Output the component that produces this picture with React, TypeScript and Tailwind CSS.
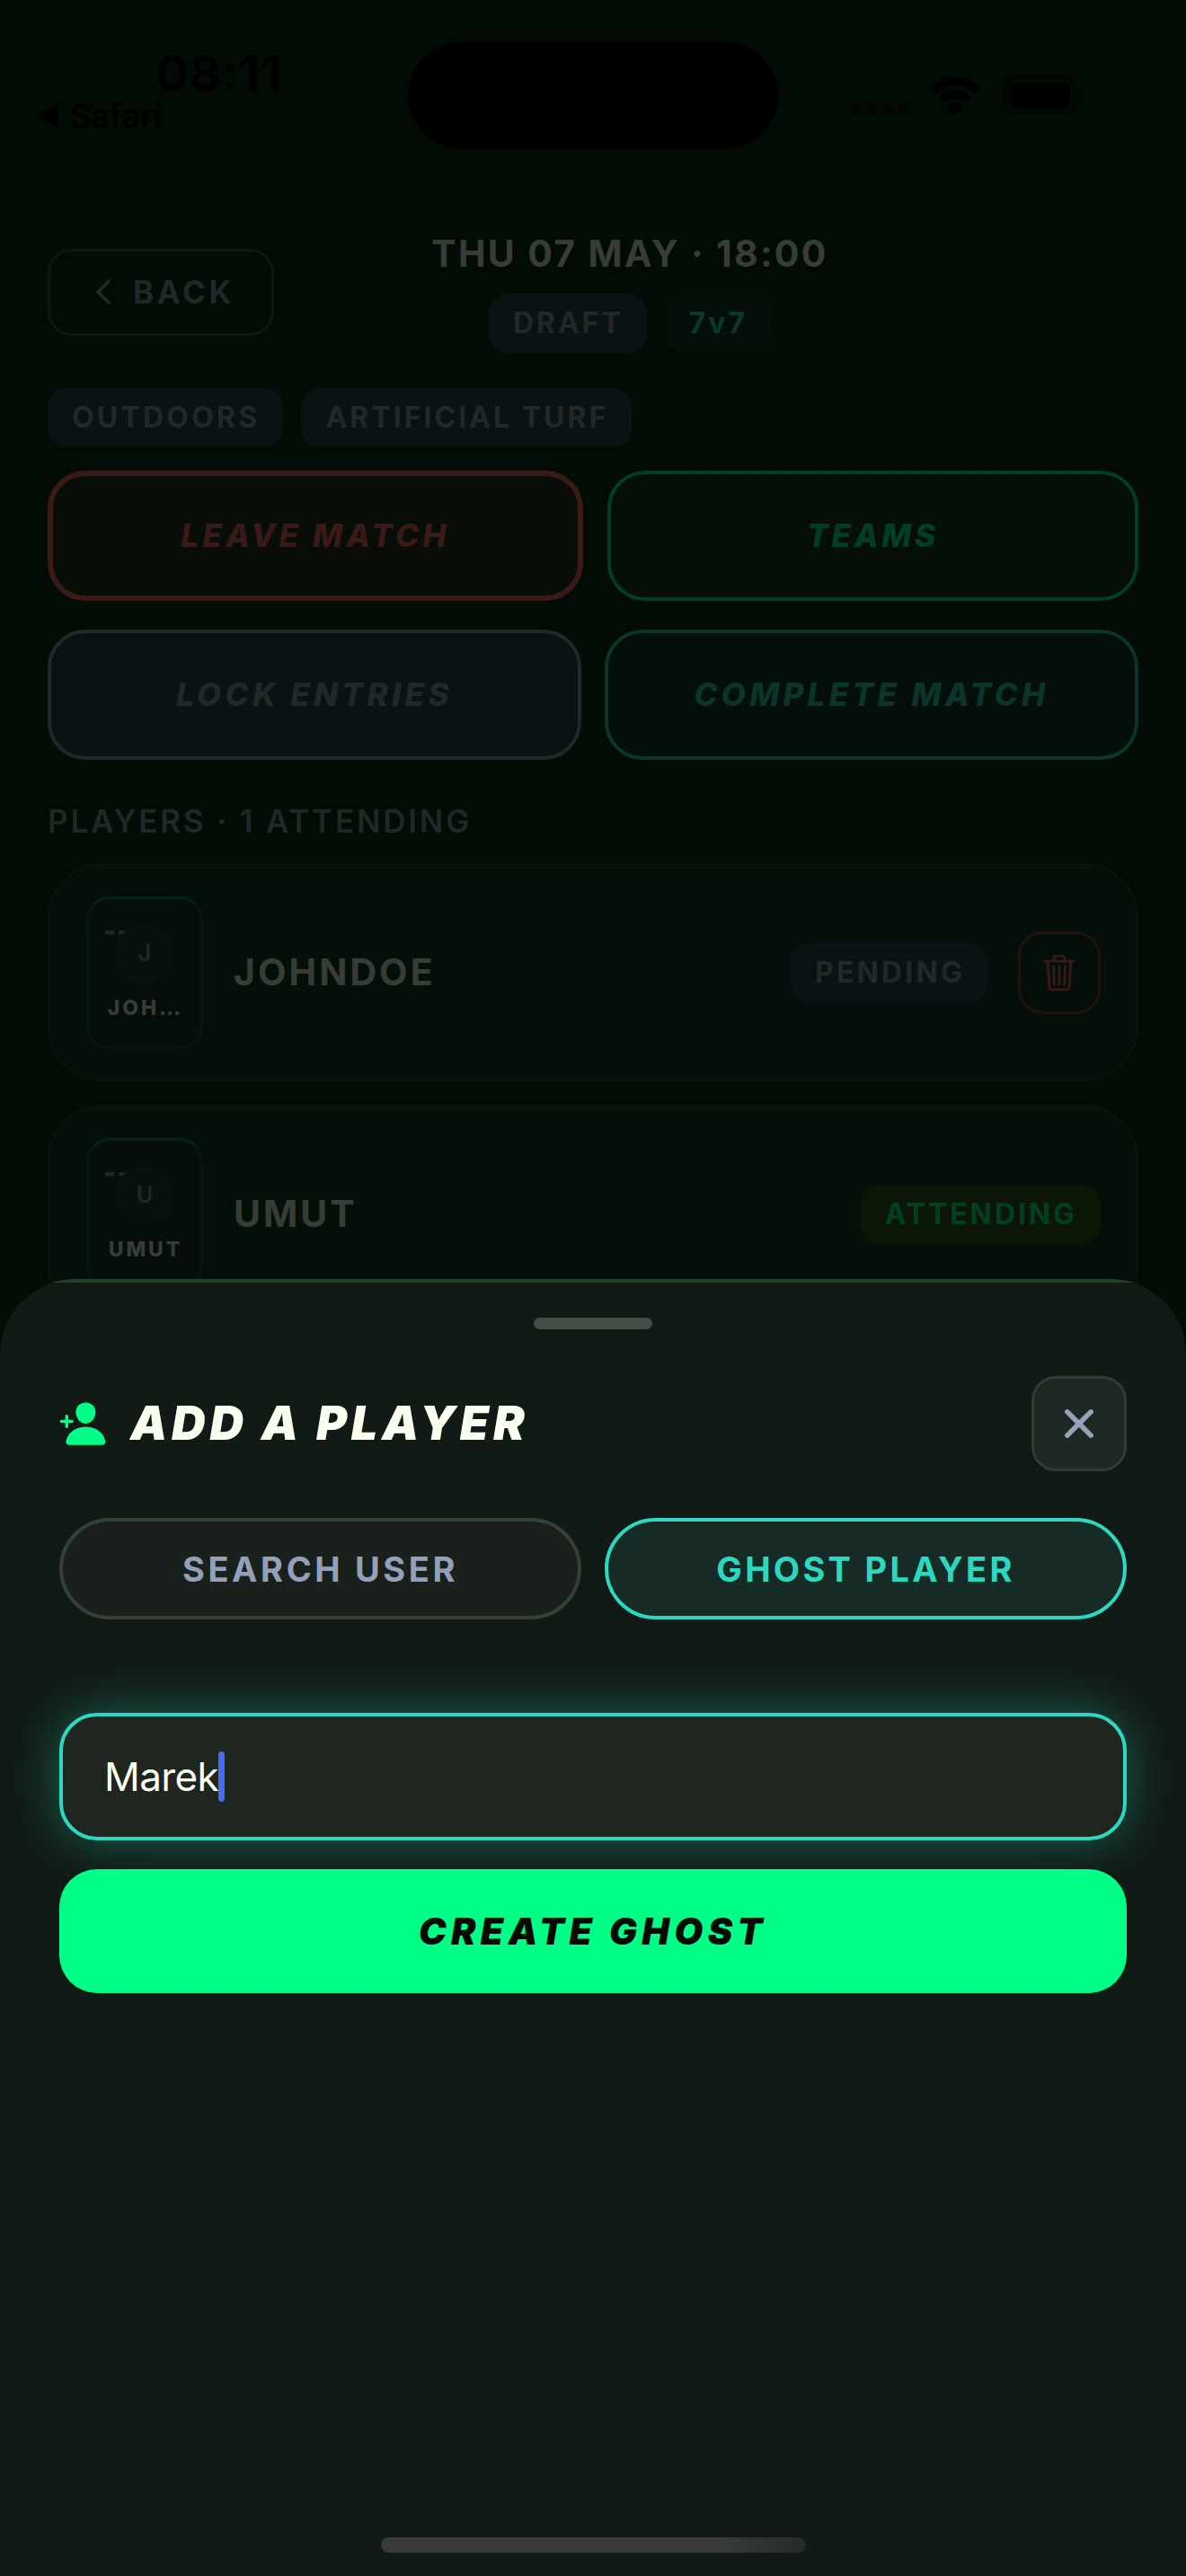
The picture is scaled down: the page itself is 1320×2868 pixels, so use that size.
import type { ReactNode } from "react";
import {
  IoChevronBack,
  IoClose,
  IoPersonAdd,
  IoTrashOutline,
} from "react-icons/io5";

function StatusBar() {
  return (
    <header className="flex h-[257px] items-start text-black">
      <div className="w-[454px] pt-[55px]">
        <div className="pl-[174px] text-[54px] leading-[54px] font-semibold tracking-[1.5px]">
          08:11
        </div>
        <div className="flex items-center gap-[13px] pt-px pl-[42px]">
          <svg width="23" height="24" viewBox="0 0 23 24" fill="currentColor">
            <path d="M1.2 10.6 20.6.6C21.8 0 23 .6 23 2v20c0 1.4-1.2 2-2.4 1.4L1.2 13.4c-1.4-.8-1.4-2 0-2.8Z" />
          </svg>
          <span className="text-[36px] leading-[38px] font-medium tracking-[0.3px]">Safari</span>
        </div>
      </div>
      <div className="mt-[46px] h-[120px] w-[412px] rounded-full bg-black" />
      <div className="flex pt-[85px] pl-[80px]">
        <div className="mt-[31px] flex gap-[5.5px]">
          {[0, 1, 2, 3].map((i) => (
            <span key={i} className="size-[12px] rounded-full bg-[#020703]" />
          ))}
        </div>
        <svg className="mt-px ml-[24px]" width="55" height="42" viewBox="0 0 55 42" fill="currentColor">
          <path d="M27.5 0C38 0 47.4 4 54.2 10.6c.8.8.8 1.8.1 2.6l-3.9 4c-.8.8-1.8.8-2.6 0C42.4 12 35.3 9 27.5 9S12.6 12 7.2 17.2c-.8.8-1.8.8-2.6 0l-3.9-4c-.7-.8-.7-1.8.1-2.6C7.6 4 17 0 27.5 0Z" />
          <path d="M27.5 14.5c6.7 0 12.7 2.6 17.2 6.8.8.8.8 1.7.1 2.5l-4 4c-.7.7-1.7.7-2.5 0a15.8 15.8 0 0 0-21.6 0c-.8.7-1.8.7-2.5 0l-4-4c-.7-.8-.7-1.7.1-2.5 4.5-4.2 10.5-6.8 17.2-6.8Z" />
          <path d="M27.5 28.5c3 0 5.7 1.1 7.8 3 .8.7.8 1.7 0 2.5l-6.5 6.9c-.8.8-1.8.8-2.6 0L19.7 34c-.8-.8-.8-1.8 0-2.5 2.1-1.9 4.8-3 7.8-3Z" />
        </svg>
        <div className="ml-[26px] flex items-center">
          <div className="h-[43px] w-[82px] rounded-[14px] border-[3px] border-[#010602] p-1">
            <div className="h-full rounded-[8px] bg-black" />
          </div>
          <div className="ml-[3px] h-[13px] w-[4px] rounded-r-full bg-[#010602]" />
        </div>
      </div>
    </header>
  );
}

function Chip({ children, tone }: { children: ReactNode; tone: string }) {
  return (
    <span
      className={`flex h-[66px] items-center rounded-[21px] pr-[26px] pl-[27px] text-[32px] leading-none font-bold ${tone}`}
    >
      {children}
    </span>
  );
}

function ActionButton({ children, tone }: { children: ReactNode; tone: string }) {
  return (
    <button
      className={`flex h-[145px] items-center justify-center rounded-[42px] text-[35px] leading-none font-extrabold italic ${tone}`}
    >
      {children}
    </button>
  );
}

function MiniCard({ initial, label }: { initial: string; label: string }) {
  return (
    <div className="relative flex h-[170px] w-[130px] flex-col items-center rounded-[26px] border-[3px] border-[#041615] border-t-[#03221e] bg-[#050e0b] pt-[28px]">
      <span className="absolute top-[17px] left-[16px] text-[30px] leading-[36px] font-black tracking-[1px] text-[#1f2827]">
        --
      </span>
      <span className="relative flex size-[66px] items-center justify-center rounded-full bg-[#091110] text-[25px] font-semibold text-[#1f2827]">
        {initial}
      </span>
      <span className="mt-[15px] pl-[2px] text-[23px] leading-[24px] font-extrabold tracking-[2.9px] text-[#373d36]">
        {label}
      </span>
    </div>
  );
}

function PlayerRow({
  initial,
  label,
  name,
  children,
}: {
  initial: string;
  label: string;
  name: string;
  children: ReactNode;
}) {
  return (
    <li className="relative flex h-[243px] items-center overflow-hidden rounded-[60px] border-[3px] border-[#09120b] bg-[#050f09] pr-[39px] pl-[40px]">
      <div className="absolute inset-x-0 top-0 h-[3px] bg-[#09150c]" />
      <MiniCard initial={initial} label={label} />
      <span className="ml-[34px] flex-1 text-[41px] leading-none font-bold tracking-[3px] text-[#373d36]">
        {name}
      </span>
      {children}
    </li>
  );
}

function MatchScreen() {
  return (
    <main className="px-[53px]">
      <div className="flex h-[136px] items-center">
        <button className="flex h-[97px] w-[252px] items-center rounded-[27px] border-[3px] border-[#101710] pl-[38px] text-[35px] leading-none font-bold tracking-[3.6px] text-[#1f2827]">
          <IoChevronBack className="mr-[12px] size-[42px]" />
          BACK
        </button>
        <div className="flex w-[792px] flex-col items-center">
          <h1 className="text-[41px] leading-[51px] font-bold tracking-[2.3px] text-[#373d36]">
            THU 07 MAY · 18:00
          </h1>
          <div className="mt-[19px] flex gap-[20px]">
            <Chip tone="bg-[#0a1213] text-[#202928] tracking-[2.9px]">DRAFT</Chip>
            <Chip tone="bg-[#050f0a] text-[#0b382d] tracking-[3px]">7v7</Chip>
          </div>
        </div>
      </div>

      <div className="mt-[39px] flex gap-[20px]">
        <Chip tone="bg-[#0a1213] text-[#202928] tracking-[3.2px]">OUTDOORS</Chip>
        <Chip tone="bg-[#0a1213] text-[#202928] tracking-[3px]">ARTIFICIAL TURF</Chip>
      </div>

      <div className="mt-[26px] flex gap-[27px]">
        <ActionButton tone="w-[596px] border-[6px] border-[#3a1a16] bg-[#080d07] text-[#3a1a16] tracking-[4.2px]">
          LEAVE MATCH
        </ActionButton>
        <ActionButton tone="flex-1 border-[4px] border-[#003f21] bg-[#050f08] text-[#003f21] tracking-[3.6px]">
          TEAMS
        </ActionButton>
      </div>
      <div className="mt-[32px] flex gap-[26px]">
        <ActionButton tone="flex-1 border-[4px] border-[#202928] bg-[#0a1213] text-[#202928] tracking-[4.4px]">
          LOCK ENTRIES
        </ActionButton>
        <ActionButton tone="flex-1 border-[4px] border-[#0b342b] bg-[#050f0a] text-[#0b342b] tracking-[4.3px]">
          COMPLETE MATCH
        </ActionButton>
      </div>

      <h2 className="mt-[42px] text-[35px] leading-[52px] font-semibold tracking-[2.8px] text-[#1f2827]">
        PLAYERS · 1 ATTENDING
      </h2>
      <ul className="mt-[21px] flex flex-col gap-[26px]">
        <PlayerRow initial="J" label="JOH…" name="JOHNDOE">
          <Chip tone="bg-[#0a1213] text-[#202928] tracking-[3.1px]">PENDING</Chip>
          <button className="ml-[33px] flex size-[92px] items-center justify-center rounded-[27px] border-[3px] border-[#21130f] text-[#3a1a16]">
            <IoTrashOutline className="size-[46px]" />
          </button>
        </PlayerRow>
        <PlayerRow initial="U" label="UMUT" name="UMUT">
          <Chip tone="bg-[#0c1607] text-[#004020] tracking-[2.9px]">ATTENDING</Chip>
        </PlayerRow>
      </ul>
    </main>
  );
}

function AddPlayerSheet() {
  return (
    <section className="absolute inset-x-0 top-[1424px] bottom-0 flex flex-col overflow-hidden rounded-t-[84px] bg-[#111a15] px-[66px]">
      <div className="absolute inset-x-0 top-0 h-[4px] bg-[#21432c]" />
      <div className="mx-auto mt-[43px] h-[13px] w-[132px] rounded-full bg-[#414e45]" />

      <div className="mt-[52px] flex h-[106px] items-center">
        <IoPersonAdd className="-ml-px size-[54px] text-[#00ff87]" />
        <h2 className="ml-[26px] flex-1 text-[52px] leading-none font-black tracking-[4.75px] text-[#fafff0] italic">
          ADD A PLAYER
        </h2>
        <button className="flex size-[106px] items-center justify-center rounded-[27px] border-[3px] border-[#333b35] bg-[#202823] text-[#94a3b8]">
          <IoClose className="size-[60px]" />
        </button>
      </div>

      <div className="mt-[52px] flex h-[113px] gap-[26px] text-[38px] leading-none font-bold">
        <button className="flex flex-1 items-center justify-center rounded-full border-[4px] border-[#373f39] bg-[#1a211c] tracking-[3.6px] text-[#94a0b8]">
          SEARCH USER
        </button>
        <button className="flex flex-1 items-center justify-center rounded-full border-[4px] border-[#2dd8c1] bg-[#172b26] tracking-[3.3px] text-[#2dd8c1]">
          GHOST PLAYER
        </button>
      </div>

      <div className="mt-[104px] flex h-[142px] items-center rounded-[42px] border-[4px] border-[#2dd8c1] bg-[#1e261f] pl-[46px] shadow-[0_0_56px_rgba(45,216,193,0.38)]">
        <span className="text-[44px] leading-none tracking-[-0.6px] text-[#fafff0]">Marek</span>
        <span className="h-[56px] w-[7px] rounded-full bg-[#4a6bf0]" />
      </div>
      <button className="relative mt-[32px] flex h-[138px] items-center justify-center rounded-[42px] bg-[#00ff87] text-[41px] leading-none font-black tracking-[5.4px] text-[#050a05] italic">
        CREATE GHOST
      </button>

      <div className="mx-auto mt-auto mb-[26px] h-[17px] w-[473px] rounded-full bg-linear-to-r from-[#383b38] from-80% to-[#262b27]" />
    </section>
  );
}

export default function App() {
  return (
    <div className="relative h-[2868px] w-[1320px] overflow-hidden bg-[#020b04] font-['Inter',sans-serif]">
      <StatusBar />
      <MatchScreen />
      <AddPlayerSheet />
    </div>
  );
}
